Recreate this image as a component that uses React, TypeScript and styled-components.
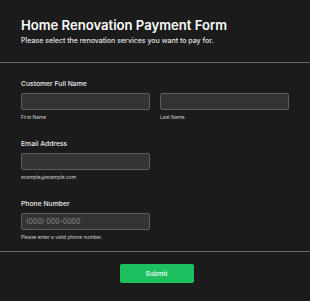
import React from "react";
import styled, { createGlobalStyle } from "styled-components";

const Global = createGlobalStyle`
  html, body { margin: 0; padding: 0; background: #1b1b1b; }
  body { font-family: Inter, "Noto Sans", Arial, sans-serif; }
  * { box-sizing: border-box; }
`;

const Page = styled.div`
  width: 310px;
  min-height: 301px;
  background: #1b1b1b;
  color: #fff;
`;

const Header = styled.header`
  padding: 16px 21px 16px;
  border-bottom: 1px solid #6a6a6a;
`;

const Title = styled.h1`
  margin: 0;
  font-size: 13.1px;
  line-height: 18px;
  font-weight: 600;
  color: #fff;
`;

const Subtitle = styled.p`
  margin: 2px 0 0;
  font-size: 7px;
  line-height: 10px;
  font-weight: 500;
  color: #e2e2e2;
`;

const Fields = styled.section`
  padding: 16px 21px 10px;
  display: flex;
  flex-direction: column;
  gap: 18px;
  border-bottom: 1px solid #6a6a6a;
`;

const Field = styled.div`
  display: flex;
  flex-direction: column;
`;

const Label = styled.label`
  font-size: 6.8px;
  line-height: 10px;
  font-weight: 500;
  color: #ececec;
  margin-bottom: 4px;
`;

const Row = styled.div`
  display: grid;
  grid-template-columns: 1fr 1fr;
  column-gap: 10px;
`;

const Cell = styled.div`
  display: flex;
  flex-direction: column;
`;

const Input = styled.input`
  width: 100%;
  height: 17px;
  margin: 0;
  padding: 0 4px;
  background: #333333;
  border: 1px solid #5e5e5e;
  border-radius: 2px;
  color: #fff;
  font-family: Inter, "Noto Sans", Arial, sans-serif;
  font-size: 7px;
  outline: none;
  &::placeholder { color: #8a8a8a; }
`;

const Hint = styled.span`
  margin-top: 4px;
  font-size: 4.9px;
  line-height: 7px;
  color: #cfcfcf;
`;

const Footer = styled.div`
  display: flex;
  justify-content: center;
  padding: 12px 0 0 3px;
`;

const Submit = styled.button`
  width: 74px;
  height: 19px;
  border: none;
  border-radius: 2px;
  background: #1ebf5f;
  color: #f4fff8;
  font-family: Inter, "Noto Sans", Arial, sans-serif;
  font-size: 6.6px;
  font-weight: 500;
  cursor: pointer;
`;

export default function App() {
  return (
    <>
      <Global />
      <Page>
        <Header>
          <Title>Home Renovation Payment Form</Title>
          <Subtitle>Please select the renovation services you want to pay for.</Subtitle>
        </Header>
        <Fields>
          <Field>
            <Label>Customer Full Name</Label>
            <Row>
              <Cell>
                <Input type="text" />
                <Hint>First Name</Hint>
              </Cell>
              <Cell>
                <Input type="text" />
                <Hint>Last Name</Hint>
              </Cell>
            </Row>
          </Field>
          <Field>
            <Label>Email Address</Label>
            <Row>
              <Cell>
                <Input type="email" />
                <Hint>example@example.com</Hint>
              </Cell>
            </Row>
          </Field>
          <Field>
            <Label>Phone Number</Label>
            <Row>
              <Cell>
                <Input type="tel" placeholder="(000) 000-0000" />
                <Hint>Please enter a valid phone number.</Hint>
              </Cell>
            </Row>
          </Field>
        </Fields>
        <Footer>
          <Submit type="button">Submit</Submit>
        </Footer>
      </Page>
    </>
  );
}
